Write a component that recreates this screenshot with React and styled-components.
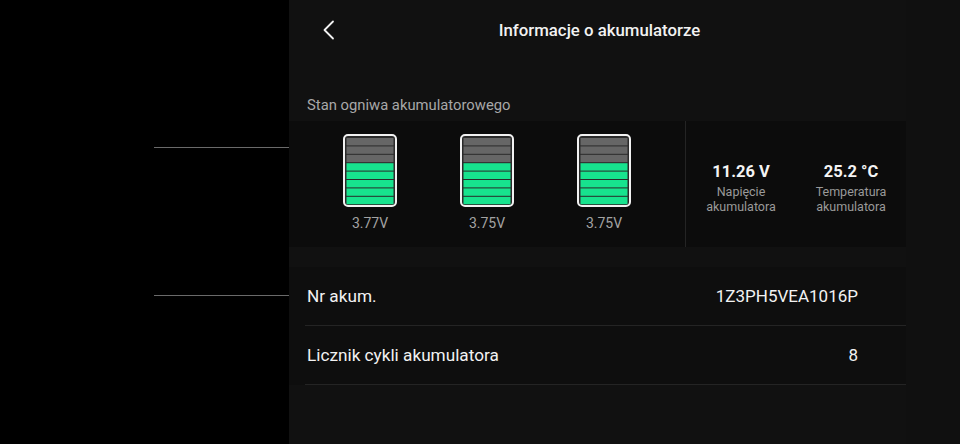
import React from "react";
import styled, { createGlobalStyle } from "styled-components";

const Global = createGlobalStyle`
  html, body { margin: 0; padding: 0; background: #000; }
  body { font-family: Roboto, "Noto Sans", Arial, sans-serif; -webkit-font-smoothing: antialiased; }
  * { box-sizing: border-box; }
`;

const Screen = styled.div`
  display: flex;
  width: 960px;
  height: 444px;
  overflow: hidden;
  background: #000;
`;

const LeftPane = styled.div`
  width: 289px;
  flex: none;
  display: flex;
  flex-direction: column;
  padding-left: 154px;
`;

const TrackLine = styled.div`
  height: 1px;
  background: #6a6a6a;
  margin-top: ${(p) => p.$offset}px;
`;

const Panel = styled.div`
  flex: 1;
  display: flex;
  background: #111111;
`;

const Content = styled.div`
  width: 617px;
  flex: none;
  display: flex;
  flex-direction: column;
`;

const SideStrip = styled.div`
  flex: 1;
  background: #101010;
`;

const Header = styled.div`
  height: 60px;
  display: grid;
  grid-template-columns: 1fr auto 1fr;
  align-items: center;
  padding-left: 4px;
`;

const BackButton = styled.button`
  width: 14px;
  height: 22px;
  margin-left: 29px;
  padding: 0;
  border: 0;
  background: none;
  display: flex;
  align-items: center;
  cursor: pointer;
`;

const Title = styled.h1`
  margin: 0;
  font-size: 16.8px;
  font-weight: 500;
  color: #f2f2f2;
  line-height: 20px;
`;

const SectionTitle = styled.div`
  padding: 36px 18px 7px;
  font-size: 14.8px;
  line-height: 18px;
  color: #a8a8a8;
`;

const CellCard = styled.div`
  height: 126px;
  display: flex;
  background: #0c0c0c;
`;

const CellsGroup = styled.div`
  width: 396px;
  flex: none;
  display: grid;
  grid-template-columns: repeat(3, 117px);
  justify-content: center;
  padding-top: 13px;
`;

const Cell = styled.div`
  display: flex;
  flex-direction: column;
  align-items: center;
`;

const CellVoltage = styled.div`
  margin-top: 8px;
  font-size: 14px;
  line-height: 16px;
  color: #a3a3a3;
`;

const Stats = styled.div`
  flex: 1;
  display: grid;
  grid-template-columns: 1fr 1fr;
  align-items: start;
  padding-top: 41px;
  border-left: 1px solid #242424;
`;

const Stat = styled.div`
  display: flex;
  flex-direction: column;
  align-items: center;
  text-align: center;
`;

const StatValue = styled.div`
  font-size: 16.5px;
  font-weight: 700;
  line-height: 20px;
  color: #f4f4f4;
`;

const StatLabel = styled.div`
  margin-top: 2px;
  font-size: 12.5px;
  line-height: 15px;
  color: #9a9a9a;
`;

const InfoList = styled.div`
  margin-top: 20px;
  background: #0e0e0e;
`;

const InfoRow = styled.div`
  height: 59px;
  margin-left: 16px;
  padding: 0 48px 1px 2px;
  display: flex;
  align-items: center;
  justify-content: space-between;
  border-bottom: 1px solid #242424;
  font-size: 17.2px;
  color: #f2f2f2;
`;

const RowLabel = styled.span``;
const RowValue = styled.span`
  font-size: 17px;
`;

function Battery() {
  const segs = [];
  const top = 4;
  const h = 7.4;
  const gap = 1;
  for (let i = 0; i < 8; i++) {
    segs.push(
      <rect
        key={i}
        x={3.5}
        y={top + i * (h + gap)}
        width={47}
        height={h}
        fill={i < 3 ? "#666666" : "#17e38e"}
      />
    );
  }
  return (
    <svg width="54" height="73" viewBox="0 0 54 73">
      <rect x="1" y="1" width="52" height="71" rx="4" fill="#2a2a2a" stroke="#f2f2f2" strokeWidth="2" />
      {segs}
    </svg>
  );
}

function Chevron() {
  return (
    <svg width="13" height="20" viewBox="0 0 13 20">
      <path d="M11 1.5 L2.5 10 L11 18.5" fill="none" stroke="#f2f2f2" strokeWidth="1.8" strokeLinecap="round" strokeLinejoin="round" />
    </svg>
  );
}

const cells = ["3.77V", "3.75V", "3.75V"];

export default function App() {
  return (
    <>
      <Global />
      <Screen>
        <LeftPane>
          <TrackLine $offset={147} />
          <TrackLine $offset={147} />
        </LeftPane>
        <Panel>
          <Content>
            <Header>
              <BackButton aria-label="Wstecz">
                <Chevron />
              </BackButton>
              <Title>Informacje o akumulatorze</Title>
              <span />
            </Header>
            <SectionTitle>Stan ogniwa akumulatorowego</SectionTitle>
            <CellCard>
              <CellsGroup>
                {cells.map((v, i) => (
                  <Cell key={i}>
                    <Battery />
                    <CellVoltage>{v}</CellVoltage>
                  </Cell>
                ))}
              </CellsGroup>
              <Stats>
                <Stat>
                  <StatValue>11.26 V</StatValue>
                  <StatLabel>
                    Napięcie
                    <br />
                    akumulatora
                  </StatLabel>
                </Stat>
                <Stat>
                  <StatValue>25.2 °C</StatValue>
                  <StatLabel>
                    Temperatura
                    <br />
                    akumulatora
                  </StatLabel>
                </Stat>
              </Stats>
            </CellCard>
            <InfoList>
              <InfoRow>
                <RowLabel>Nr akum.</RowLabel>
                <RowValue>1Z3PH5VEA1016P</RowValue>
              </InfoRow>
              <InfoRow>
                <RowLabel>Licznik cykli akumulatora</RowLabel>
                <RowValue>8</RowValue>
              </InfoRow>
            </InfoList>
          </Content>
          <SideStrip />
        </Panel>
      </Screen>
    </>
  );
}
